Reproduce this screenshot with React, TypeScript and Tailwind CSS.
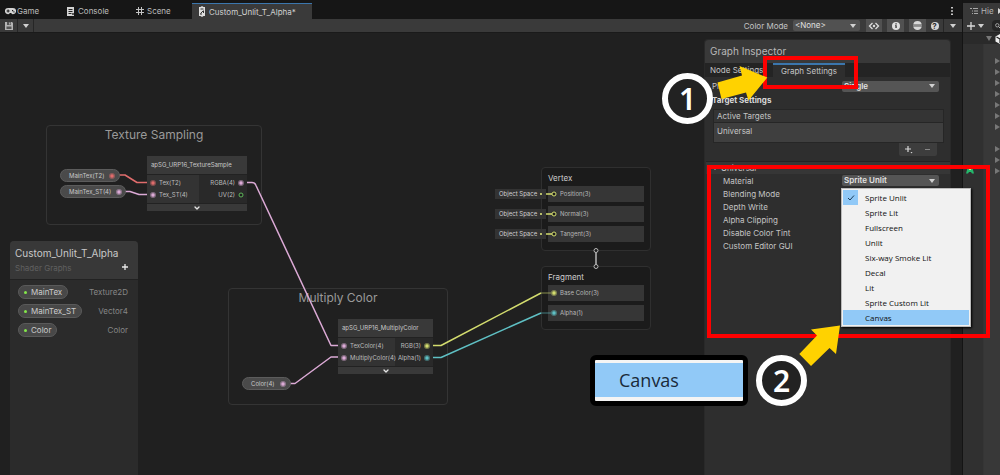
import React from "react";
import { ChevronDown } from "lucide-react";

const PINK = "#dcaad6";
const RED = "#e06c6c";
const LIME = "#d3dc6e";
const TEAL = "#5fc0c4";

function Port({ color, open = false }: { color: string; open?: boolean }) {
  return (
    <svg viewBox="0 0 8 8" className="size-2 shrink-0" aria-hidden="true">
      {open ? (
        <circle cx="4" cy="4" r="2" fill="#1d1d1d" stroke={color} strokeWidth="1" />
      ) : (
        <>
          <circle cx="4" cy="4" r="3" fill={color} opacity="0.45" />
          <circle cx="4" cy="4" r="1.7" fill={color} />
        </>
      )}
    </svg>
  );
}

function Caret({ className = "" }: { className?: string }) {
  return (
    <svg viewBox="0 0 6 4" className={"h-1 w-1.5 shrink-0 " + className} aria-hidden="true">
      <path d="M0 0h6L3 4z" fill="#d0d0d0" />
    </svg>
  );
}

function PropertyPill({ name, color, place }: { name: string; color: string; place: string }) {
  return (
    <div
      className={
        "absolute flex h-[13px] items-center gap-1 rounded-full border border-[#5c5c5c] bg-[#4a4a4a] pr-1.5 pl-1 text-[6px] leading-none text-[#c8c8c8] " +
        place
      }
    >
      <span className="size-[3px] rounded-full bg-[#84e84a]" />
      <span className="grow whitespace-nowrap">{name}</span>
      <Port color={color} />
    </div>
  );
}

type PortDef = { name: string; color: string; open?: boolean };

function SubGraphNode({
  title,
  inputs,
  outputs,
  place,
  inputWidth,
}: {
  title: string;
  inputs: PortDef[];
  outputs: PortDef[];
  place: string;
  inputWidth: string;
}) {
  return (
    <article className={"absolute bg-[#393939] text-[6px] leading-none text-[#bcbcbc] " + place}>
      <h3 className="flex h-[18px] items-center px-1 whitespace-nowrap text-[#c8c8c8]">{title}</h3>
      <div className="flex border-y border-[#222] bg-[#292929]">
        <ul className={"bg-[#333] py-0.5 pl-0.5 " + inputWidth}>
          {inputs.map((p) => (
            <li key={p.name} className="flex h-3 items-center gap-0.5 whitespace-nowrap">
              <Port color={p.color} />
              {p.name}
            </li>
          ))}
        </ul>
        <ul className="grow py-0.5 pr-0.5">
          {outputs.map((p) => (
            <li key={p.name} className="flex h-3 items-center justify-end gap-0.5 whitespace-nowrap">
              {p.name}
              <Port color={p.color} open={p.open} />
            </li>
          ))}
        </ul>
      </div>
      <button aria-label="Collapse ports" className="flex h-[7px] w-full items-center justify-center">
        <ChevronDown size={8} strokeWidth={4} color="#e4e4e4" />
      </button>
    </article>
  );
}

function Group({ title, place }: { title: string; place: string }) {
  return (
    <div
      className={
        "absolute rounded border border-[#343434] text-center text-[12px] leading-[18px] text-[#9a9a9a] " + place
      }
    >
      {title}
    </div>
  );
}

function Stack({ title, ports, place }: { title: string; ports: PortDef[]; place: string }) {
  return (
    <section className={"absolute w-[110px] rounded border border-[#2f2f2f] bg-[#1b1b1b] px-1.5 pb-2 " + place}>
      <h3 className="h-[18px] pt-1 text-[8px] leading-3 text-[#cccccc]">{title}</h3>
      <ul className="flex flex-col gap-1">
        {ports.map((p) => (
          <li
            key={p.name}
            className="flex h-4 items-center gap-0.5 bg-[#363636] pl-0.5 text-[6px] leading-none text-[#b8b8b8]"
          >
            <Port color={p.color} open={p.open} />
            {p.name}
          </li>
        ))}
      </ul>
    </section>
  );
}

function ObjectSpace({ place }: { place: string }) {
  return (
    <div
      className={
        "absolute flex h-2.5 w-[51px] items-center justify-between bg-[#333] pr-1 pl-1 text-[6px] leading-none whitespace-nowrap text-[#d0d0d0] " +
        place
      }
    >
      Object Space
      <span className="size-0.5 rounded-full bg-[#e5ee80]" />
    </div>
  );
}

function Edges() {
  return (
    <svg className="absolute top-0 left-0 h-[400px] w-[660px]" viewBox="0 33 660 400" fill="none" aria-hidden="true">
      <g strokeWidth="1.5" strokeLinejoin="round">
        <path d="M119 175h6l12 7.500h12" stroke={RED} />
        <path d="M125 191.500h5l9 3h10" stroke={PINK} />
        <path d="M245 182.500h7q3 0 4 3l75 160h9" stroke={PINK} />
        <path d="M290 383.500h5L331 357h9" stroke={PINK} />
        <path d="M431 345.500h10L541 293" stroke={LIME} />
        <path d="M431 357.500h10L541 313" stroke={TEAL} />
      </g>
    </svg>
  );
}

function PortStubs() {
  return (
    <svg className="absolute top-[134px] left-[540px] h-[170px] w-[70px]" viewBox="540 167 70 170" fill="none" aria-hidden="true">
      <path d="M546 194h6M546 214h6M546 234h6" stroke={LIME} strokeWidth="1.5" />
      <path d="M541 293h10" stroke={LIME} opacity="0.6" />
      <path d="M541 313h10" stroke={TEAL} opacity="0.6" />
      <path d="M596 252v13" stroke="#b8b8b8" strokeWidth="1.5" />
      <circle cx="596" cy="250.500" r="2" fill="#1b1b1b" stroke="#b8b8b8" />
      <circle cx="596" cy="266.500" r="2" fill="#1b1b1b" stroke="#b8b8b8" />
    </svg>
  );
}

function GraphCanvas() {
  return (
    <div className="relative grow bg-[#202020]">
      <Group title="Texture Sampling" place="left-[46px] top-[92px] w-[216px] h-[100px]" />
      <Group title="Multiply Color" place="left-[228px] top-[255px] w-[220px] h-[117px]" />
      <Stack
        title="Vertex"
        place="left-[541px] top-[134px]"
        ports={[
          { name: "Position(3)", color: LIME, open: true },
          { name: "Normal(3)", color: LIME, open: true },
          { name: "Tangent(3)", color: LIME, open: true },
        ]}
      />
      <Stack
        title="Fragment"
        place="left-[541px] top-[233px]"
        ports={[
          { name: "Base Color(3)", color: LIME },
          { name: "Alpha(1)", color: TEAL },
        ]}
      />
      <Edges />
      <ObjectSpace place="left-[495px] top-[156px]" />
      <ObjectSpace place="left-[495px] top-[176px]" />
      <ObjectSpace place="left-[495px] top-[196px]" />
      <PortStubs />
      <PropertyPill name="MainTex(T2)" color={RED} place="left-[60px] top-[136px] w-[60px]" />
      <PropertyPill name="MainTex_ST(4)" color={PINK} place="left-[60px] top-[152px] w-[66px]" />
      <PropertyPill name="Color(4)" color={PINK} place="left-[242px] top-[344px] w-[49px]" />
      <SubGraphNode
        title="apSG_URP16_TextureSample"
        place="left-[147px] top-[123px] w-[100px]"
        inputWidth="w-[52px]"
        inputs={[
          { name: "Tex(T2)", color: RED },
          { name: "Tex_ST(4)", color: PINK },
        ]}
        outputs={[
          { name: "RGBA(4)", color: PINK },
          { name: "UV(2)", color: "#5fb85a", open: true },
        ]}
      />
      <SubGraphNode
        title="apSG_URP16_MultiplyColor"
        place="left-[338px] top-[286px] w-[95px]"
        inputWidth="w-[57px]"
        inputs={[
          { name: "TexColor(4)", color: PINK },
          { name: "MultiplyColor(4)", color: PINK },
        ]}
        outputs={[
          { name: "RGB(3)", color: LIME },
          { name: "Alpha(1)", color: TEAL },
        ]}
      />
      <Blackboard />
    </div>
  );
}

function Blackboard() {
  const properties = [
    ["MainTex", "Texture2D"],
    ["MainTex_ST", "Vector4"],
    ["Color", "Color"],
  ];
  return (
    <section className="absolute top-[208px] bottom-0 left-[10px] w-32 overflow-hidden rounded-t bg-[#2b2b2b]">
      <header className="flex h-[39px] items-end justify-between border-b border-[#222] bg-[#383838] px-[5px] pb-1">
        <div>
          <h2 className="text-[10px] leading-[16px] text-[#c8c8c8]">Custom_Unlit_T_Alpha</h2>
          <p className="text-[8px] leading-[14px] text-[#606060]">Shader Graphs</p>
        </div>
        <button aria-label="Add property" className="mr-1 mb-1">
          <svg viewBox="0 0 8 8" className="size-2">
            <path d="M4 1v6M1 4h6" stroke="#e8e8e8" strokeWidth="1.300" />
          </svg>
        </button>
      </header>
      <ul className="flex flex-col gap-[5px] pt-[5px] pr-2.5 pl-2">
        {properties.map(([name, type]) => (
          <li key={name} className="flex items-center justify-between">
            <span className="flex h-3.5 items-center gap-1 rounded-full border border-[#5a5a5a] bg-[#484848] px-[5px] text-[8px] leading-none text-[#cccccc]">
              <span className="size-[3px] rounded-full bg-[#84e84a]" />
              {name}
            </span>
            <span className="text-[8px] leading-none text-[#868686]">{type}</span>
          </li>
        ))}
      </ul>
    </section>
  );
}

function TabBar() {
  return (
    <nav className="flex h-[19px] items-end bg-[#161616] text-[8px] leading-4 text-[#bcbcbc]">
      <a href="#game" className="flex h-4 w-[61px] items-center gap-px pl-[5px]">
        <svg viewBox="0 0 11 8" className="h-2 w-[11px]">
          <path
            fill="#d4d4d4"
            fillRule="evenodd"
            d="M3 1h5a3 3 0 010 6.200Q6.800 7.200 6.200 6H4.800Q4.200 7.200 3 7.200A3 3 0 013 1zM2.600 2.600v1H1.600v1h1v1h1v-1h1v-1h-1v-1zM7 3v1.200h1.200V3zM8.400 4.200v1.200h1.100V4.200z"
          />
        </svg>
        Game
      </a>
      <a href="#console" className="flex h-4 w-[69px] items-center gap-[3px] pl-[6px]">
        <svg viewBox="0 0 8 9" className="h-[9px] w-2">
          <path fill="#d4d4d4" d="M0 0h7v9H0z" />
          <path d="M1.500 2.500h4M1.500 4.500h4M1.500 6.500h3" stroke="#222" />
          <path d="M5 6h2v2H5z" fill="#555" />
        </svg>
        Console
      </a>
      <a href="#scene" className="flex h-4 w-[62px] items-center gap-[3px] pl-[6px]">
        <svg viewBox="0 0 8 8" className="size-2">
          <path d="M2.500 0v8M5.500 0v8M0 2.500h8M0 5.500h8" stroke="#c4c4c4" />
        </svg>
        Scene
      </a>
      <a
        href="#custom-unlit"
        aria-current="page"
        className="flex h-4 items-center gap-[3px] border-t border-[#3b76ad] bg-[#3a3a3a] pr-4 pl-[6px] whitespace-nowrap text-[#d0d0d0]"
      >
        <svg viewBox="0 0 8 11" className="h-[11px] w-2">
          <path fill="#dedede" d="M1 1h1.500L4 0l1.500 1H7v9H5.500L4 11 2.500 10H1z" />
          <path d="M2.500 3h3M2.500 7.500L5.500 4.500M2 8h2M5.500 5v2" stroke="#333" fill="none" />
        </svg>
        Custom_Unlit_T_Alpha*
      </a>
      <button aria-label="Tab options" className="mr-[7px] ml-auto flex h-4 w-1.5 items-center justify-center">
        <svg viewBox="0 0 2 8" className="h-2 w-0.5" fill="#c8c8c8">
          <path d="M0 0h2v1.500H0zM0 3.200h2v1.500H0zM0 6.400h2v1.500H0z" />
        </svg>
      </button>
    </nav>
  );
}

function Toolbar() {
  return (
    <div className="flex h-[14px] items-stretch border-b border-[#1a1a1a] bg-[#3a3a3a] text-[8px] leading-none text-[#c4c4c4]">
      <button aria-label="Save asset" className="flex w-[18px] items-center justify-center border-r border-[#262626]">
        <svg viewBox="0 0 8 8" className="size-2">
          <path fill="#b4b4b4" d="M0 0h7l1 1v7H0z" />
          <path fill="#555" d="M2 0h4v3H2zM1.500 4.500h5V7h-5z" />
          <path fill="#ccc" d="M4.300 .5h1v2h-1z" />
        </svg>
      </button>
      <button aria-label="Save options" className="flex w-4 items-center justify-center border-r border-[#262626]">
        <Caret />
      </button>
      <label htmlFor="color-mode" className="mr-[5px] ml-auto flex items-center">
        Color Mode
      </label>
      <span className="relative mr-1.5 flex items-center">
        <select
          id="color-mode"
          className="h-[11px] w-[67px] appearance-none rounded-xs bg-[#515151] pl-0.5 text-[8px] leading-[11px] text-[#e0e0e0]"
        >
          <option>&lt;None&gt;</option>
        </select>
        <Caret className="absolute right-1" />
      </span>
      <button aria-label="View generated code" className="mr-[5px] flex w-4 items-center justify-center bg-[#515151]">
        <svg viewBox="0 0 12 8" className="h-2 w-3" fill="none">
          <path d="M4.500 1L1.500 4l3 3M7.500 1l3 3-3 3" stroke="#dcdcdc" strokeWidth="1.300" />
          <circle cx="6" cy="4" r="1.200" fill="#dcdcdc" />
        </svg>
      </button>
      <button aria-label="Graph inspector" className="mr-[5px] flex w-[17px] items-center justify-center bg-[#515151]">
        <svg viewBox="0 0 8 8" className="size-2">
          <circle cx="4" cy="4" r="4" fill="#e0e0e0" />
          <path d="M3.400 1.300h1.300v1.200H3.400zM3 3.300h1.700v2.600H3.400V4.100H3z" fill="#333" />
        </svg>
      </button>
      <button aria-label="Main preview" className="flex w-[17px] items-center justify-center bg-[#515151]">
        <svg viewBox="0 0 9 9" className="size-[9px]">
          <path d="M.2 3.500a4.400 4.400 0 018.600 0z M.2 5.500a4.400 4.400 0 008.600 0z" fill="#d8d8d8" />
          <path d="M0 4h9v1H0z" fill="#8a8a8a" />
        </svg>
      </button>
      <button aria-label="Help" className="flex w-[18px] items-center justify-center border-r border-[#262626]">
        <span className="flex size-2 items-center justify-center rounded-full bg-[#d4d4d4] text-[8px] leading-none font-bold text-[#2c2c2c]">
          ?
        </span>
      </button>
      <button aria-label="More options" className="flex w-[18px] items-center justify-center">
        <Caret />
      </button>
    </div>
  );
}

function InspectorSelect({ id, value }: { id: string; value: string }) {
  return (
    <span className="relative flex items-center">
      <select
        id={id}
        className="h-[11px] w-[97px] appearance-none rounded-xs bg-[#555] pl-0.5 text-[8px] leading-[11px] font-semibold text-[#e2e2e2]"
      >
        <option>{value}</option>
      </select>
      <Caret className="absolute right-1" />
    </span>
  );
}

const MATERIALS = [
  "Sprite Unlit",
  "Sprite Lit",
  "Fullscreen",
  "Unlit",
  "Six-way Smoke Lit",
  "Decal",
  "Lit",
  "Sprite Custom Lit",
  "Canvas",
];

function MaterialMenu() {
  return (
    <ul
      role="listbox"
      aria-label="Material"
      className="absolute top-[188px] right-[29px] w-[130px] border border-[#bbb] bg-[#f1f1f1] p-px font-['Open_Sans',sans-serif] text-[8px] leading-[15px] text-[#101010] shadow-[1px_1px_2px_#000]"
    >
      {MATERIALS.map((name, i) => (
        <li
          key={name}
          role="option"
          aria-selected={i === 0}
          className={i === MATERIALS.length - 1 ? "flex h-[15px] bg-[#91c9f7]" : "flex h-[15px]"}
        >
          <span className={i === 0 ? "flex w-[15px] items-center justify-center bg-[#91c9f7]" : "w-[15px]"}>
            {i === 0 && (
              <svg viewBox="0 0 8 8" className="size-2">
                <path d="M1 4l2 2 4-4.500" stroke="#1c3c58" fill="none" />
              </svg>
            )}
          </span>
          <span className="pl-[7px]">{name}</span>
        </li>
      ))}
    </ul>
  );
}

function GraphInspector() {
  return (
    <aside className="mt-1.5 mr-[11px] w-[247px] shrink-0 rounded-t border-x border-t border-[#292929] bg-[#2e2e2e] text-[8px] text-[#c4c4c4]">
      <h2 className="flex h-[23px] items-center rounded-t bg-[#393939] pl-[5px] text-[10px] text-[#b8b8b8]">
        Graph Inspector
      </h2>
      <div role="tablist" className="flex h-[14px] items-stretch bg-[#242424] leading-[14px] whitespace-nowrap">
        <button role="tab" aria-selected="false" className="w-[68px] pl-[5px] text-left">
          Node Settings
        </button>
        <button role="tab" aria-selected="true" className="w-[72px] border-t-2 border-[#3b76ad] bg-[#2e2e2e] leading-[10px]">
          Graph Settings
        </button>
      </div>
      <div className="flex h-[18px] items-center justify-between pr-[11px] pl-[7px]">
        <label htmlFor="precision">Precision</label>
        <InspectorSelect id="precision" value="Single" />
      </div>
      <h3 className="h-[14px] pl-[7px] leading-[10px] font-bold text-[#dadada]">Target Settings</h3>
      <div className="mr-1.5 ml-2 border border-[#262626]">
        <p className="h-3 bg-[#343434] pl-[3px] leading-3">Active Targets</p>
        <p className="h-5 border-t border-[#262626] bg-[#3f3f3f] pl-[3px] leading-[17px]">Universal</p>
      </div>
      <div className="mr-[13px] ml-auto flex h-[13px] w-[38px] items-center justify-around rounded-b-xs bg-[#3d3d3d]">
        <button aria-label="Add target">
          <svg viewBox="0 0 9 9" className="size-[9px]">
            <path d="M4 1v6M1 4h6" stroke="#d8d8d8" strokeWidth="1.200" />
            <path d="M6.500 7h2l-1 1.500z" fill="#d8d8d8" />
          </svg>
        </button>
        <button aria-label="Remove target">
          <svg viewBox="0 0 9 9" className="size-[9px]">
            <path d="M2 4.500h5" stroke="#888" />
          </svg>
        </button>
      </div>
      <h3 className="mt-[5px] ml-px flex h-[13px] items-center gap-[3px] border-t border-[#242424] bg-[#363636] pl-1.5">
        <Caret />
        Universal
      </h3>
      <div className="flex h-[13px] items-center justify-between pr-[11px] pl-[18px]">
        <label htmlFor="material">Material</label>
        <InspectorSelect id="material" value="Sprite Unlit" />
      </div>
      <ul className="pt-px pl-[18px] leading-[13px]">
        <li>Blending Mode</li>
        <li>Depth Write</li>
        <li>Alpha Clipping</li>
        <li>Disable Color Tint</li>
        <li>Custom Editor GUI</li>
      </ul>
    </aside>
  );
}

function Hierarchy() {
  const rows = [true, true, true, true, true, true, true, false, true, true, true];
  return (
    <aside className="flex w-[38px] shrink-0 flex-col overflow-hidden border-l border-[#141414] bg-[#383838] text-[8px] text-[#b4b4b4]">
      <div className="h-[3px] shrink-0 bg-[#161616]" />
      <div className="flex h-4 items-center pl-[7px]">
        <svg viewBox="0 0 8 7" className="mr-[3px] h-[7px] w-2 shrink-0">
          <path d="M0 .5h2M3 .5h5M2 3h1M4 3h4M2 5.500h1M4 5.500h4" stroke="#a8a8a8" />
        </svg>
        Hie
        <svg viewBox="0 0 4 6" className="ml-1 h-1.5 w-1 shrink-0">
          <path d="M0 0v6l4-3z" fill="#d8d8d8" />
        </svg>
      </div>
      <div className="flex h-[14px] items-center border-b border-[#222] pl-1">
        <svg viewBox="0 0 8 8" className="size-2 shrink-0">
          <path d="M4 0v8M0 4h8" stroke="#d8d8d8" strokeWidth="1.300" />
        </svg>
        <Caret className="ml-[3px]" />
        <span className="ml-2 flex h-[11px] w-[13px] shrink-0 items-center rounded-l bg-[#252525] pl-[3px]">
          <svg viewBox="0 0 6 6" className="size-1.5">
            <circle cx="2.300" cy="2.300" r="1.700" fill="none" stroke="#bbb" strokeWidth=".8" />
            <path d="M3.500 3.500L6 6" stroke="#bbb" />
          </svg>
        </span>
      </div>
      <div className="flex h-[11px] items-center bg-[#2a2a2a] pl-[23px]">
        <svg viewBox="0 0 6 5" className="h-[5px] w-1.5 shrink-0">
          <path d="M0 0h6L3 5z" fill="#777" />
        </svg>
        <svg viewBox="0 0 10 10" className="ml-[3px] size-2.5 shrink-0">
          <path d="M5 0l4.500 2.500v5L5 10 .5 7.500v-5z" fill="#eee" />
          <path d="M5 5V9M5 5L1.500 3M5 5l3.500-2" stroke="#222" strokeWidth="1.200" />
        </svg>
      </div>
      <div className="flex grow">
        <div className="w-[21px] shrink-0 border-r border-[#353535] bg-[#303030] pt-[122px] pl-[3px]">
          <svg viewBox="0 0 8 8" className="size-2">
            <path d="M2 1h4l1 3 1 3.500H6L5 6H3L2 7.500H0L1 4z" fill="#25b86c" />
            <path d="M3 2h2v2H3z" fill="#e8e06a" />
          </svg>
        </div>
        <ul className="pt-[11px] pl-[11px]">
          {rows.map((visible, i) => (
            <li key={i} className="flex h-[11px] items-center">
              {visible && (
                <svg viewBox="0 0 5 6" className="h-1.5 w-[5px]">
                  <path d="M0 0v6l5-3z" fill="#777" />
                </svg>
              )}
            </li>
          ))}
        </ul>
      </div>
    </aside>
  );
}

function StepBadge({ step, place }: { step: string; place: string }) {
  return (
    <div
      className={
        "absolute flex size-[51px] items-center justify-center rounded-full border-6 border-white bg-[#222] font-['Noto_Sans',sans-serif] text-[30px] leading-none font-semibold text-white " +
        place
      }
    >
      {step}
    </div>
  );
}

function Annotations() {
  return (
    <>
      <div className="pointer-events-none absolute top-[56px] right-[142px] h-[33px] w-[95px] border-4 border-[#fe0000]" />
      <div className="pointer-events-none absolute top-[165px] right-[10px] h-[173px] w-[283px] border-4 border-[#fe0000]" />
      <MaterialMenu />
      <StepBadge step="1" place="top-[73px] right-[287px]" />
      <StepBadge step="2" place="top-[355px] right-[193px]" />
      <svg
        className="pointer-events-none absolute top-[60px] right-[150px] h-[310px] w-[150px]"
        viewBox="700 60 150 310"
        fill="#ffd200"
        aria-hidden="true"
      >
        <path d="M739.500 66L767.300 77.500 748.500 100.500 746 92.500 721.500 99 717.500 82.500 742 75.500z" />
        <path d="M840 325.500L811 329.500 817 335.500 799.300 354 811 366 829.500 348 836 354z" />
      </svg>
      <div className="absolute top-[355px] right-[252px] w-[158px] rounded-md border-5 border-black bg-[#f4f4f4] pt-[3px] pb-1">
        <p className="bg-[#91c9f7] pl-6 font-['Open_Sans',sans-serif] text-[18px] leading-[34px] text-[#1a2a3a]">
          Canvas
        </p>
      </div>
    </>
  );
}

export default function App() {
  return (
    <div className="relative flex min-h-screen overflow-hidden bg-[#202020] font-[Inter,sans-serif]">
      <div className="flex min-w-0 grow flex-col">
        <TabBar />
        <Toolbar />
        <main className="flex grow bg-[#202020]">
          <GraphCanvas />
          <GraphInspector />
        </main>
      </div>
      <Hierarchy />
      <Annotations />
    </div>
  );
}
